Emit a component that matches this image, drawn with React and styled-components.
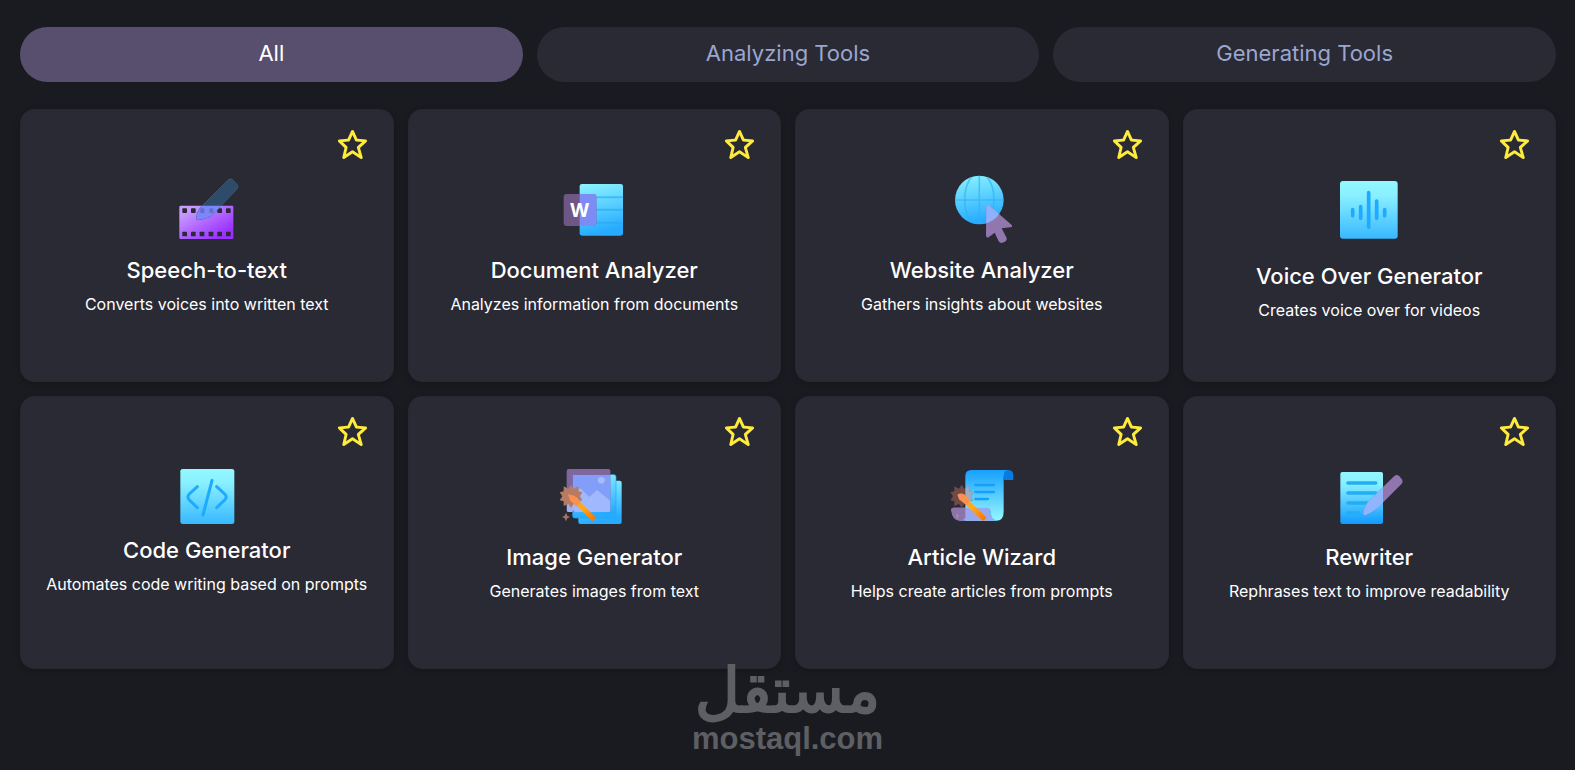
import React, { useState } from "react";
import styled, { createGlobalStyle } from "styled-components";
import { BiStar, BiSolidStar } from "react-icons/bi";

const GlobalStyle = createGlobalStyle`
  *, *::before, *::after { box-sizing: border-box; }
  body {
    margin: 0;
    background: #1a1b20;
    color: #ffffff;
    font-family: Inter, "Open Sans", sans-serif;
  }
`;

const Page = styled.main`
  position: relative;
  min-height: 100vh;
  padding: 27px 19px 101px 20px;
`;

const Tabs = styled.nav`
  display: grid;
  grid-template-columns: repeat(3, 1fr);
  gap: 14px;
  margin-bottom: 27px;
`;

const Tab = styled.button`
  height: 55px;
  padding: 0 24px 3px;
  border: 0;
  border-radius: 28px;
  background: ${(p) => (p.$active ? "#584f6e" : "#2a2a35")};
  color: ${(p) => (p.$active ? "#ffffff" : "#9ba6d0")};
  font: inherit;
  font-size: 22px;
  line-height: 32px;
  cursor: pointer;
`;

const Grid = styled.section`
  display: grid;
  grid-template-columns: repeat(4, 1fr);
  gap: 14px;
`;

const Card = styled.article`
  display: flex;
  flex-direction: column;
  align-items: center;
  min-height: 273px;
  padding: 17px 23px;
  border: 1px solid #282832;
  border-radius: 14px;
  background: #2a2a35;
  box-shadow: 0 2px 6px rgba(0, 0, 0, 0.2);
  text-align: center;
`;

const Favorite = styled.button`
  display: flex;
  align-self: flex-end;
  margin-bottom: 10px;
  padding: 0;
  border: 0;
  background: none;
  color: #ffeb3b;
  font-size: 35px;
  cursor: pointer;
`;

const artGap = { compact: "4px", regular: "11px", roomy: "17px" };

const Art = styled.svg`
  display: block;
  flex: none;
  width: 80px;
  height: 72px;
  margin-bottom: ${(p) => artGap[p.$spacing]};
`;

const Title = styled.h2`
  margin: 0;
  font-size: 22px;
  font-weight: 500;
  line-height: 30px;
  white-space: nowrap;
`;

const Description = styled.p`
  margin: 7px 0 0;
  font-size: 16px;
  line-height: 24px;
  white-space: nowrap;
`;

const Watermark = styled.div`
  position: absolute;
  right: 0;
  bottom: 13px;
  left: 0;
  display: flex;
  flex-direction: column;
  align-items: center;
  color: #5e5f63;
  pointer-events: none;
`;

const ArabicName = styled.span`
  font-family: "DejaVu Sans", sans-serif;
  font-size: 62px;
  line-height: 60px;
  -webkit-text-stroke: 2px #5e5f63;
`;

const LatinName = styled.span`
  font-family: "Liberation Sans", Arial, sans-serif;
  font-size: 31px;
  font-weight: 700;
  line-height: 36px;
`;

const Gradients = () => (
  <svg width="0" height="0" style={{ position: "absolute" }} aria-hidden="true">
    <defs>
      <linearGradient id="sky" x1="0" y1="0" x2="0" y2="1">
        <stop offset="0" stopColor="#92f8ff" />
        <stop offset="0.25" stopColor="#8af0ff" />
        <stop offset="1" stopColor="#38b8ff" />
      </linearGradient>
      <linearGradient id="deepSky" x1="0" y1="0" x2="0.2" y2="1">
        <stop offset="0" stopColor="#8ef5ff" />
        <stop offset="1" stopColor="#27abff" />
      </linearGradient>
      <linearGradient id="sheet" x1="0" y1="0" x2="0" y2="1">
        <stop offset="0" stopColor="#92f8ff" />
        <stop offset="0.25" stopColor="#86eeff" />
        <stop offset="1" stopColor="#109aff" />
      </linearGradient>
      <linearGradient id="film" x1="0" y1="0" x2="1" y2="1">
        <stop offset="0.15" stopColor="#c79aff" />
        <stop offset="0.85" stopColor="#9a2fff" />
      </linearGradient>
      <linearGradient id="scroll" x1="0" y1="0" x2="0" y2="1">
        <stop offset="0" stopColor="#17a0ff" />
        <stop offset="1" stopColor="#96f8ff" />
      </linearGradient>
      <linearGradient id="wand" x1="0" y1="0" x2="1" y2="1">
        <stop offset="0" stopColor="#ff8f4d" />
        <stop offset="0.5" stopColor="#ffac1c" />
        <stop offset="1" stopColor="#ff7a00" />
      </linearGradient>
    </defs>
  </svg>
);

const brushPath =
  "M204 44 Q211 39 217 44 L231 59 Q235 65 230 72 L164 142 Q150 159 130 161 L110 165 Q105 146 124 124 Z";

const SpeechArt = () => (
  <>
    <clipPath id="filmClip"><rect x="57" y="122" width="162" height="100" /></clipPath>
    <rect x="57" y="122" width="162" height="100" rx="4" fill="url(#film)" />
    {[66, 92, 118, 145, 171, 197].map((x) => (
      <g key={x} fill="#2a2a35">
        <rect x={x} y="130" width="14" height="14" rx="2" />
        <rect x={x} y="200" width="14" height="14" rx="2" />
      </g>
    ))}
    <path d={brushPath} fill="#2e4c6a" stroke="#3d6480" strokeWidth="2" />
    <path d={brushPath} fill="#7b86fb" clipPath="url(#filmClip)" />
    <g fill="#676bd2"><rect x="120" y="130" width="12" height="14" /><rect x="147" y="130" width="12" height="14" /></g>
  </>
);

const DocumentArt = () => (
  <>
    <clipPath id="docClip"><rect x="105" y="57" width="130" height="155" /></clipPath>
    <rect x="105" y="57" width="130" height="155" rx="7" fill="url(#deepSky)" />
    <path d="M106 97H234M106 134H234M106 173H234" stroke="#28a6f2" strokeOpacity="0.6" strokeWidth="6" />
    <rect x="57" y="87" width="98" height="96" rx="9" fill="#6e5685" />
    <rect x="57" y="87" width="98" height="96" rx="9" fill="#7d8bf4" clipPath="url(#docClip)" />
    <text x="105" y="156" textAnchor="middle" fill="#ffffff" fontFamily="Inter, sans-serif" fontSize="57" fontWeight="700">W</text>
  </>
);

const cursorPath =
  "M153 123 Q154 116 161 121 L229 180 Q233 187 224 187 L199 190 L214 219 Q216 226 209 230 L199 234 Q193 234 190 229 L178 203 L160 217 Q152 220 152 211 Z";

const WebsiteArt = () => (
  <>
    <clipPath id="globeClip"><circle cx="132" cy="105" r="73" /></clipPath>
    <circle cx="132" cy="105" r="73" fill="url(#deepSky)" />
    <g fill="none" stroke="#2fb2f5" strokeOpacity="0.65" strokeWidth="5" clipPath="url(#globeClip)">
      <path d="M132 32V178M59 105H205" />
      <path d="M111 32C78 72 82 145 113 178M153 32C186 72 182 145 151 178" />
    </g>
    <path d={cursorPath} fill="#9277ae" />
    <path d={cursorPath} fill="#8fb1fb" clipPath="url(#globeClip)" />
  </>
);

const VoiceArt = () => (
  <>
    <rect x="61" y="48" width="173" height="173" rx="9" fill="url(#sky)" />
    <path
      d="M99 134V152M123 125V160M147 83V187M171 108V160M195 134V152"
      stroke="#1daaff" strokeWidth="11" strokeLinecap="round"
    />
  </>
);

const CodeArt = () => (
  <>
    <rect x="60" y="42" width="162" height="165" rx="7" fill="url(#sky)" />
    <path
      d="M111 95L87 117Q78 126 87 135L111 158M169 95L193 117Q202 126 193 135L169 158M155 76L128 180"
      fill="none" stroke="#1daaff" strokeWidth="9" strokeLinecap="round" strokeLinejoin="round"
    />
  </>
);

const Burst = ({ fill }) => (
  <path
    fill={fill}
    d="M79 89L87 101L101 94L102 109L113 112L106 124L113 136L101 139L100 153L87 147L79 158L71 147L57 153L57 139L45 136L53 124L45 112L57 109L57 94L71 101Z"
  />
);

const ImageArt = () => (
  <>
    <clipPath id="stackClip"><rect x="84" y="60" width="129" height="129" /></clipPath>
    <clipPath id="photoClip"><rect x="66" y="42" width="131" height="129" rx="5" /></clipPath>
    <rect x="101" y="77" width="130" height="130" rx="6" fill="url(#deepSky)" />
    <rect x="84" y="59" width="130" height="130" rx="6" fill="url(#deepSky)" stroke="#28a4ee" strokeWidth="2" />
    <rect x="66" y="42" width="131" height="129" rx="6" fill="#80669f" />
    <g clipPath="url(#photoClip)">
      <rect x="84" y="60" width="129" height="129" fill="#829ef8" clipPath="url(#stackClip)" />
      <path d="M66 150L106 99L134 126L157 105L197 137V171H66Z" fill="#a4bcff" opacity="0.85" />
      <circle cx="170" cy="76" r="10" fill="#a8bdff" />
    </g>
    <Burst fill="#b57b65" />
    <path d="M84 129L144 189" stroke="url(#wand)" strokeWidth="15" strokeLinecap="round" />
    <path d="M70 117L96 126L108 140L94 153L76 136Z" fill="#fb9150" />
    <path d="M64 173L68 182L76 186L68 190L64 199L60 190L52 186L60 182ZM86 165L89 170L86 175L83 170Z" fill="#a27564" />
  </>
);

const ArticleArt = () => (
  <>
    <path d="M90 63Q90 45 108 45H222L205 65V170Q205 197 182 197H90Z" fill="url(#scroll)" />
    <path d="M205 75V63Q205 45 220 45Q234 46 234 62V75Z" fill="#087be0" />
    <path d="M120 90H176M120 111H176M120 132H158" stroke="#16a1f8" strokeWidth="7" strokeLinecap="round" />
    <path d="M48 164Q48 158 54 158H158Q165 158 165 166Q165 196 185 197H76Q49 196 48 164Z" fill="#9aa6ee" />
    <path d="M48 164Q48 158 54 158H90V188Q84 197 75 197Q50 195 48 164Z" fill="#8c73aa" />
    <path d="M165 166Q165 196 185 197" fill="none" stroke="#55c8fa" strokeWidth="3" />
    <Burst fill="#704a46" />
    <path d="M90 98L101 94L102 109L113 112L106 124L113 136L101 139L90 132Z" fill="#9faac5" />
    <path d="M78 126L144 189" stroke="url(#wand)" strokeWidth="15" strokeLinecap="round" />
    <path d="M66 119Q76 112 90 120L104 136L91 148L72 134Z" fill="#fb9150" />
    <path d="M66 175L70 183L66 191L62 183Z" fill="#b18b9d" />
  </>
);

const penPath =
  "M224 63Q231 57 239 64L246 72Q251 79 246 86L176 157Q160 171 136 181Q130 182 131 175Q134 155 146 139Z";

const RewriterArt = () => (
  <>
    <clipPath id="sheetClip"><rect x="62" y="51" width="128" height="156" /></clipPath>
    <rect x="62" y="51" width="128" height="156" rx="6" fill="url(#sheet)" />
    <path d="M85 84H168M85 114H168M85 144H150M85 174H115" stroke="#23adf5" strokeWidth="11" strokeLinecap="round" />
    <path d={penPath} fill="#9176ae" />
    <path d={penPath} fill="#8fb5fd" clipPath="url(#sheetClip)" />
  </>
);

const tools = [
  { title: "Speech-to-text", text: "Converts voices into written text", art: SpeechArt, box: "20 21 240 216", kind: "analyze" },
  { title: "Document Analyzer", text: "Analyzes information from documents", art: DocumentArt, box: "28 21 240 216", kind: "analyze" },
  { title: "Website Analyzer", text: "Gathers insights about websites", art: WebsiteArt, box: "20 21 240 216", kind: "analyze" },
  { title: "Voice Over Generator", text: "Creates voice over for videos", art: VoiceArt, box: "28 21 240 216", kind: "generate", spacing: "roomy" },
  { title: "Code Generator", text: "Automates code writing based on prompts", art: CodeArt, box: "20 12 240 216", kind: "generate", spacing: "compact" },
  { title: "Image Generator", text: "Generates images from text", art: ImageArt, box: "28 12 240 216", kind: "generate" },
  { title: "Article Wizard", text: "Helps create articles from prompts", art: ArticleArt, box: "20 12 240 216", kind: "generate" },
  { title: "Rewriter", text: "Rephrases text to improve readability", art: RewriterArt, box: "28 12 240 216", kind: "generate" },
];

const filters = [
  { id: "all", label: "All" },
  { id: "analyze", label: "Analyzing Tools" },
  { id: "generate", label: "Generating Tools" },
];

function ToolCard({ tool }) {
  const [saved, setSaved] = useState(false);
  const Drawing = tool.art;
  return (
    <Card>
      <Favorite
        type="button"
        aria-label={`Favorite ${tool.title}`}
        aria-pressed={saved}
        onClick={() => setSaved(!saved)}
      >
        {saved ? <BiSolidStar /> : <BiStar />}
      </Favorite>
      <Art viewBox={tool.box} $spacing={tool.spacing || "regular"} aria-hidden="true">
        <Drawing />
      </Art>
      <Title>{tool.title}</Title>
      <Description>{tool.text}</Description>
    </Card>
  );
}

export default function App() {
  const [filter, setFilter] = useState("all");
  const shown = tools.filter((t) => filter === "all" || t.kind === filter);
  return (
    <Page>
      <GlobalStyle />
      <Gradients />
      <Tabs aria-label="Tool categories">
        {filters.map((f) => (
          <Tab key={f.id} type="button" $active={f.id === filter} aria-pressed={f.id === filter} onClick={() => setFilter(f.id)}>
            {f.label}
          </Tab>
        ))}
      </Tabs>
      <Grid>
        {shown.map((t) => (
          <ToolCard key={t.title} tool={t} />
        ))}
      </Grid>
      <Watermark>
        <ArabicName lang="ar" dir="rtl">مستقل</ArabicName>
        <LatinName>mostaql.com</LatinName>
      </Watermark>
    </Page>
  );
}
